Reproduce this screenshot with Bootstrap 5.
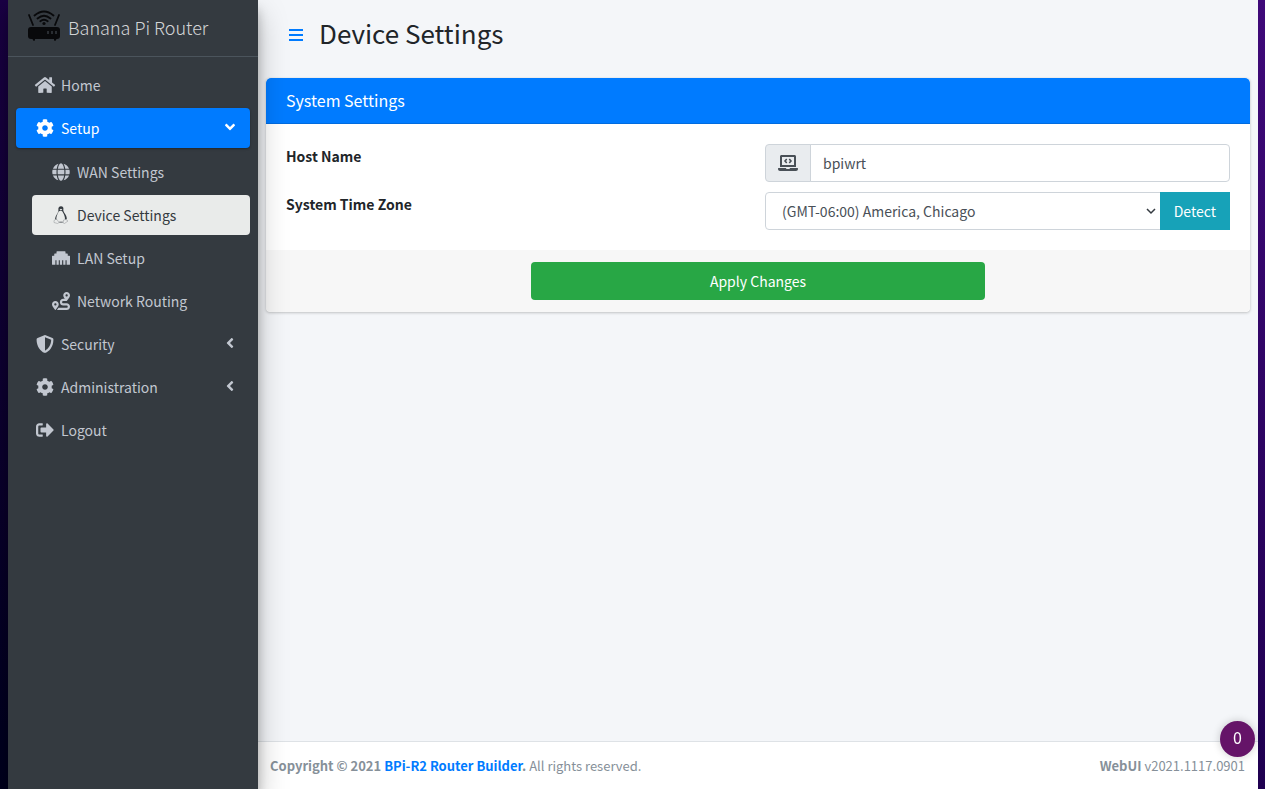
<!DOCTYPE html>
<html lang="en">
<head>
<meta charset="utf-8">
<meta name="viewport" content="width=device-width, initial-scale=1">
<title>Device Settings - Banana Pi Router</title>
<link rel="stylesheet" href="https://cdn.jsdelivr.net/npm/bootstrap@5.3.0/dist/css/bootstrap.min.css">
<style>
  :root { --side-bg: #343a40; --side-fg: #c2c7d0; --blue: #007bff; --edge: #ced4da; }
  body {
    font-family: "Noto Sans CJK SC", "Noto Sans", sans-serif;
    font-size: 14px; line-height: 24px; color: #212529;
    padding: 0 7px 0 8px;
    background: linear-gradient(to bottom, #1a0044, #00001e) left / 8px 100% no-repeat,
                linear-gradient(to bottom, #3f0979, #1f0050) right / 7px 100% no-repeat;
  }
  a { text-decoration: none; }
  .sidebar {
    width: 250px; background: var(--side-bg); z-index: 2;
    box-shadow: 0 14px 28px rgba(0,0,0,.25), 0 10px 10px rgba(0,0,0,.22);
  }
  .brand-link {
    height: 57px; padding: 0 20px 2px; gap: 8px; border-bottom: 1px solid #4b545c;
    font-size: 18px; font-weight: 300; color: rgba(255,255,255,.8);
  }
  .brand-link svg { width: 32px; height: 32px; margin-bottom: 2px; }
  .side-menu { padding: 8px; }
  .side-menu, .side-menu ul { gap: 3px; }
  .side-menu ul { padding-left: 16px; margin-top: 4px; }
  .side-menu .nav-link {
    height: 40px; padding: 0 16px; gap: 3px; border-radius: 4px; color: var(--side-fg);
  }
  .side-menu .nav-link.current-group {
    background: var(--blue); color: #fff;
    box-shadow: 0 1px 3px rgba(0,0,0,.12), 0 1px 2px rgba(0,0,0,.24);
  }
  .side-menu .nav-link.current-page { background: #e9ebea; color: #343a40; }
  .nav-icon { width: 26px; height: 18px; }
  .nav-arrow { width: 8px; height: 16px; margin-bottom: 2px; }
  svg { fill: currentColor; flex: none; }
  .page { background: #f4f6f9; min-width: 0; }
  .page-head { padding: 15px 30px; gap: 15px; min-height: 70px; }
  .page-head h1 { font-size: 26px; line-height: 34px; font-weight: 400; padding-bottom: 5px; }
  .menu-toggle { color: var(--blue); }
  .panel {
    --bs-card-border-width: 0; border-radius: 4px; margin: 8px 8px 0; overflow: hidden;
    box-shadow: 0 0 1px rgba(0,0,0,.125), 0 1px 3px rgba(0,0,0,.2);
  }
  .panel .card-header { background: var(--blue); color: #fff; padding: 10px 20px 11px; border-bottom: 1px solid rgba(0,0,0,.125); }
  .panel .card-title { font-size: 16px; line-height: 24px; font-weight: 400; }
  .panel .card-body { padding: 20px; }
  .panel .card-footer { padding: 12px 20px; background: #f7f7f7; }
  .form-rows { gap: 10px; }
  .form-rows .row { --bs-gutter-x: 14px; }
  .form-rows label { font-weight: 700; }
  .form-control, .form-select, .input-group-text, .btn { font-size: 14px; line-height: 24px; height: 38px; border-radius: 4px; }
  .form-control, .form-select, .input-group-text { border-color: var(--edge); color: #495057; }
  .input-group-text { background: #e9ecef; }
  .form-select {
    padding-left: 16px; background-position: right 3px center; background-size: 12px;
    background-image: url("data:image/svg+xml,%3Csvg xmlns='http://www.w3.org/2000/svg' viewBox='0 0 12 12'%3E%3Cpath fill='none' stroke='%23343a40' stroke-width='1.5' d='M2 4l4 4 4-4'/%3E%3C/svg%3E");
  }
  .btn-detect { background: #17a2b8; color: #fff; border-radius: 0; padding-left: 13px; padding-right: 13px; }
  .btn-apply { background: #28a745; color: #fff; width: 48%; }
  .page-foot {
    background: #fff; border-top: 1px solid #dee2e6; color: #869099;
    font-size: 13px; line-height: 24px; padding: 12px 13px 11px 12px;
  }
  .page-foot a { color: var(--blue); }
  .counter {
    position: fixed; right: 10px; bottom: 32px; z-index: 3; width: 35px; height: 36px;
    background: #651468; color: #fff; font-size: 16px; border: 0;
    box-shadow: 0 0 8px rgba(0,0,0,.2);
  }
</style>
</head>
<body>
<div class="d-flex min-vh-100">
  <aside class="sidebar flex-shrink-0 position-relative">
    <a href="#" class="brand-link d-flex align-items-center">
      <svg viewBox="0 0 32 32" aria-hidden="true" style="color:#08090b">
        <rect x="0" y="17" width="32" height="12" rx="3"/>
        <path d="M4 28h3v2q-1 2-2 0zM26 28h3l-1 2q-1 2-2 0z"/>
        <path d="M1 5l4 10M31 5l-4 10M6.500 5.500q9.500-8 19 0M9.500 8.500q6.500-5.500 13 0M12.300 11.300q3.700-3 7.400 0" fill="none" stroke="currentColor" stroke-width="1.800" stroke-linecap="round"/>
        <circle cx="16" cy="13.500" r="1.600"/>
        <path d="M20 21v3M24 21v3M28 21v3" stroke="#343a40" stroke-width="1.500"/>
      </svg>
      <span>Banana Pi Router</span>
    </a>
    <nav aria-label="Main">
      <ul class="side-menu nav flex-column flex-nowrap">
        <li><a href="#" class="nav-link d-flex align-items-center">
          <svg class="nav-icon" viewBox="0 0 576 512"><path d="M280.37 148.26L96 300.11V464a16 16 0 0 0 16 16l112.06-.29a16 16 0 0 0 15.92-16V368a16 16 0 0 1 16-16h64a16 16 0 0 1 16 16v95.64a16 16 0 0 0 16 16.05L464 480a16 16 0 0 0 16-16V300L295.67 148.26a12.19 12.19 0 0 0-15.3 0zM571.6 251.47L488 182.56V44.05a12 12 0 0 0-12-12h-56a12 12 0 0 0-12 12v72.61L318.47 43a48 48 0 0 0-61 0L4.34 251.47a12 12 0 0 0-1.6 16.9l25.5 31A12 12 0 0 0 45.15 301l235.22-193.74a12.19 12.19 0 0 1 15.3 0L530.9 301a12 12 0 0 0 16.9-1.6l25.5-31a12 12 0 0 0-1.7-16.93z"/></svg>
          <span>Home</span></a></li>
        <li><a href="#" class="nav-link current-group d-flex align-items-center" aria-expanded="true">
          <svg class="nav-icon" viewBox="0 0 512 512"><path id="cog" d="M487.4 315.7l-42.6-24.6c4.3-23.2 4.3-47 0-70.2l42.6-24.6c4.900-2.800 7.100-8.600 5.500-14-11.100-35.600-30-67.800-54.700-94.600-3.800-4.100-10-5.100-14.800-2.300L380.8 110c-17.900-15.400-38.500-27.300-60.800-35.100V25.800c0-5.600-3.900-10.500-9.400-11.700-36.700-8.200-74.300-7.800-109.200 0-5.500 1.200-9.400 6.100-9.400 11.700V75c-22.200 7.900-42.800 19.800-60.800 35.100L88.700 85.500c-4.900-2.800-11-1.900-14.800 2.300-24.700 26.700-43.600 58.900-54.700 94.600-1.700 5.400.6 11.200 5.500 14L67.300 221c-4.300 23.200-4.300 47 0 70.200l-42.600 24.600c-4.900 2.800-7.100 8.600-5.500 14 11.100 35.600 30 67.800 54.700 94.600 3.800 4.100 10 5.100 14.800 2.300l42.600-24.600c17.900 15.400 38.500 27.300 60.800 35.100v49.200c0 5.600 3.900 10.500 9.400 11.700 36.700 8.200 74.300 7.800 109.200 0 5.500-1.200 9.400-6.100 9.400-11.700v-49.200c22.200-7.900 42.800-19.800 60.800-35.100l42.600 24.600c4.900 2.800 11 1.900 14.800-2.300 24.700-26.700 43.600-58.900 54.700-94.600 1.500-5.500-.7-11.300-5.600-14.100zM256 336c-44.100 0-80-35.900-80-80s35.900-80 80-80 80 35.900 80 80-35.900 80-80 80z"/></svg>
          <span class="flex-grow-1">Setup</span>
          <svg class="nav-arrow" viewBox="0 0 256 512" style="transform:rotate(-90deg)"><path id="angle" d="M31.7 239l136-136c9.4-9.4 24.6-9.4 33.9 0l22.6 22.6c9.4 9.4 9.4 24.6 0 33.9L127.9 256l96.4 96.4c9.4 9.4 9.4 24.6 0 33.9L201.7 409c-9.4 9.4-24.6 9.4-33.9 0l-136-136c-9.5-9.4-9.5-24.6-.1-34z"/></svg></a>
          <ul class="nav flex-column">
            <li><a href="#" class="nav-link d-flex align-items-center">
              <svg class="nav-icon" viewBox="0 0 496 512"><path d="M336.5 160C322 70.7 287.8 8 248 8s-74 62.7-88.5 152h177zM152 256c0 22.2 1.2 43.5 3.3 64h185.3c2.1-20.5 3.3-41.8 3.3-64s-1.2-43.5-3.3-64H155.3c-2.1 20.5-3.3 41.8-3.3 64zm324.7-96c-28.6-67.9-86.5-120.4-158-141.6 24.4 33.8 41.2 84.7 50 141.6h108zM177.2 18.400C105.800 39.600 47.800 92.100 19.300 160h108c8.700-56.900 25.500-107.800 49.900-141.600zM487.400 192H372.700c2.100 21 3.300 42.500 3.300 64s-1.200 43-3.300 64h114.600c5.500-20.500 8.600-41.800 8.600-64s-3.100-43.500-8.500-64zM120 256c0-21.500 1.200-43 3.300-64H8.600C3.200 212.500 0 233.800 0 256s3.200 43.500 8.600 64h114.600c-2-21-3.200-42.500-3.200-64zm39.500 96c14.500 89.300 48.700 152 88.500 152s74-62.700 88.500-152h-177zm159.300 141.600c71.400-21.200 129.400-73.700 158-141.600h-108c-8.800 56.900-25.600 107.800-50 141.600zM19.300 352c28.600 67.900 86.500 120.400 158 141.600-24.400-33.800-41.200-84.700-50-141.600h-108z"/></svg>
              <span>WAN Settings</span></a></li>
            <li><a href="#" class="nav-link current-page d-flex align-items-center" aria-current="page">
              <svg class="nav-icon" viewBox="0 0 18 18">
                <path d="M9 .3c-2 0-2.800 1.300-2.600 3.500.1 1.700-.4 2.800-1.500 4.500-1 1.600-1.900 3.500-1.800 5.200l1 .6.4-.4c-.6-2 .6-5.100 1.700-7.200.5-1 .9-1.800 2.400-1.800s1.900.9 2.500 2c1 1.800 2.200 4.500 1.800 6.500l.7.900 1.200-1c.1-2-.9-3.900-2-5.500-1-1.400-1.500-2.300-1.500-4C11.800 1.600 11 .3 9 .3zM7.200 15.700h3.600v.8H7.200z"/>
                <path d="M3.500 13.500l-1.500 1v2l3.500 1 1.500-1-2-3zM14 13.500l2 1.500-3.500 2.500-1.300-.5.300-3z" fill="#e9ebea" stroke="#8d9194" stroke-width=".5"/>
                <path d="M7.500 3.500L9 4.500l1.400-1-1.400-.7z" fill="#e9ebea"/>
              </svg>
              <span>Device Settings</span></a></li>
            <li><a href="#" class="nav-link d-flex align-items-center">
              <svg class="nav-icon" viewBox="0 0 512 512"><path d="M496 192h-48v-48c0-8.800-7.200-16-16-16h-48V80c0-8.800-7.200-16-16-16H144c-8.800 0-16 7.200-16 16v48H80c-8.800 0-16 7.200-16 16v48H16c-8.800 0-16 7.200-16 16v224c0 8.800 7.200 16 16 16h80V320h32v128h64V320h32v128h64V320h32v128h64V320h32v128h80c8.800 0 16-7.200 16-16V208c0-8.800-7.200-16-16-16z"/></svg>
              <span>LAN Setup</span></a></li>
            <li><a href="#" class="nav-link d-flex align-items-center">
              <svg class="nav-icon" viewBox="0 0 512 512"><path d="M416 320h-96c-17.600 0-32-14.400-32-32s14.400-32 32-32h96s96-107 96-160-43-96-96-96-96 43-96 96c0 25.500 22.200 63.400 45.300 96H320c-52.900 0-96 43.100-96 96s43.100 96 96 96h96c17.600 0 32 14.400 32 32s-14.400 32-32 32H185.500c-16 24.800-33.800 47.700-47.300 64H416c52.900 0 96-43.100 96-96s-43.100-96-96-96zm0-256c17.700 0 32 14.300 32 32s-14.300 32-32 32-32-14.300-32-32 14.300-32 32-32zM96 256c-53 0-96 43-96 96s96 160 96 160 96-107 96-160-43-96-96-96zm0 128c-17.700 0-32-14.300-32-32s14.300-32 32-32 32 14.300 32 32-14.300 32-32 32z"/></svg>
              <span>Network Routing</span></a></li>
          </ul>
        </li>
        <li><a href="#" class="nav-link d-flex align-items-center" aria-expanded="false">
          <svg class="nav-icon" viewBox="0 0 512 512"><path d="M466.500 83.700l-192-80a48.150 48.150 0 0 0-36.900 0l-192 80C27.700 91.100 16 108.600 16 128c0 198.500 114.500 335.700 221.500 380.300 11.800 4.900 25.100 4.900 36.900 0C360.100 472.600 496 349.300 496 128c0-19.400-11.700-36.900-29.500-44.300zM256.100 446.300l-.1-381 175.900 73.300c-3.300 151.400-82.100 261.100-175.800 307.700z"/></svg>
          <span class="flex-grow-1">Security</span>
          <svg class="nav-arrow" viewBox="0 0 256 512"><use href="#angle"/></svg></a></li>
        <li><a href="#" class="nav-link d-flex align-items-center" aria-expanded="false">
          <svg class="nav-icon" viewBox="0 0 512 512"><use href="#cog"/></svg>
          <span class="flex-grow-1">Administration</span>
          <svg class="nav-arrow" viewBox="0 0 256 512"><use href="#angle"/></svg></a></li>
        <li><a href="#" class="nav-link d-flex align-items-center">
          <svg class="nav-icon" viewBox="0 0 512 512"><path d="M497 273L329 441c-15 15-41 4.500-41-17v-96H152c-13.300 0-24-10.700-24-24v-96c0-13.300 10.700-24 24-24h136V88c0-21.400 25.900-32 41-17l168 168c9.300 9.400 9.300 24.600 0 34zM192 436v-40c0-6.600-5.400-12-12-12H96c-17.700 0-32-14.300-32-32V160c0-17.700 14.300-32 32-32h84c6.600 0 12-5.400 12-12V76c0-6.600-5.400-12-12-12H96c-53 0-96 43-96 96v192c0 53 43 96 96 96h84c6.600 0 12-5.400 12-12z"/></svg>
          <span>Logout</span></a></li>
      </ul>
    </nav>
  </aside>

  <div class="page flex-grow-1 d-flex flex-column">
    <header class="page-head d-flex align-items-center">
      <a href="#" class="menu-toggle d-flex" aria-label="Toggle menu">
        <svg width="16" height="14" viewBox="0 0 16 14"><path d="M1 1h14v2H1zM1 6h14v2H1zM1 11h14v2H1z"/></svg>
      </a>
      <h1 class="mb-0">Device Settings</h1>
    </header>
    <main>
      <form class="card panel" onsubmit="return false">
        <div class="card-header"><h2 class="card-title mb-0">System Settings</h2></div>
        <div class="card-body d-flex flex-column form-rows">
          <div class="row">
            <div class="col-6"><label for="hostname">Host Name</label></div>
            <div class="col-6">
              <div class="input-group">
                <span class="input-group-text"><svg width="20" height="16" viewBox="0 0 640 512"><path d="M255.030 261.650c6.250 6.250 16.380 6.250 22.630 0l11.310-11.310c6.250-6.250 6.250-16.380 0-22.630L253.250 192l35.710-35.720c6.250-6.250 6.250-16.380 0-22.630l-11.310-11.310c-6.250-6.250-16.380-6.250-22.630 0l-58.340 58.340c-6.250 6.250-6.250 16.380 0 22.630l58.350 58.340zm96.010-11.300l11.310 11.310c6.250 6.250 16.380 6.250 22.630 0l58.340-58.340c6.250-6.250 6.250-16.380 0-22.630l-58.340-58.340c-6.250-6.250-16.380-6.250-22.630 0l-11.310 11.310c-6.250 6.250-6.250 16.380 0 22.630L386.750 192l-35.710 35.720c-6.250 6.250-6.250 16.380 0 22.630zM624 416H381.540c-.74 19.810-14.710 32-32.740 32H288c-18.690 0-33.020-17.470-32.770-32H16c-8.800 0-16 7.200-16 16v16c0 35.200 28.800 64 64 64h512c35.200 0 64-28.800 64-64v-16c0-8.800-7.200-16-16-16zM576 48c0-26.400-21.600-48-48-48H112C85.600 0 64 21.600 64 48v336h512V48zm-64 272H128V64h384v256z"/></svg></span>
                <input type="text" id="hostname" class="form-control" value="bpiwrt">
              </div>
            </div>
          </div>
          <div class="row">
            <div class="col-6"><label for="timezone">System Time Zone</label></div>
            <div class="col-6">
              <div class="input-group">
                <select id="timezone" class="form-select"><option>(GMT-06:00) America, Chicago</option></select>
                <button type="button" class="btn btn-detect">Detect</button>
              </div>
            </div>
          </div>
        </div>
        <div class="card-footer d-flex justify-content-center">
          <button type="submit" class="btn btn-apply">Apply Changes</button>
        </div>
      </form>
    </main>
    <footer class="page-foot mt-auto d-flex justify-content-between">
      <div><strong>Copyright © 2021 <a href="#">BPi-R2 Router Builder</a>.</strong> All rights reserved.</div>
      <div><b>WebUI</b> v2021.1117.0901</div>
    </footer>
  </div>
</div>
<button type="button" class="counter rounded-circle px-0 pt-0 pb-1">0</button>
<script src="https://cdn.jsdelivr.net/npm/bootstrap@5.3.0/dist/js/bootstrap.bundle.min.js"></script>
</body>
</html>
